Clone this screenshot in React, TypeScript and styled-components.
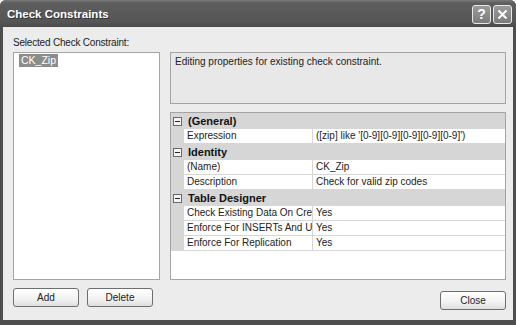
import styled, { createGlobalStyle } from "styled-components";

const GlobalStyle = createGlobalStyle`
  html, body {
    margin: 0;
    padding: 0;
    background: #ffffff;
  }
  * {
    box-sizing: border-box;
  }
`;

const Window = styled.div`
  width: 516px;
  height: 325px;
  display: flex;
  flex-direction: column;
  background: #4e4e4e;
  border-radius: 6px 6px 0 0;
  overflow: hidden;
  font-family: "Liberation Sans", Arial, sans-serif;
  font-size: 10px;
  color: #000;
`;

const TitleBar = styled.div`
  height: 27px;
  flex: none;
  display: flex;
  align-items: center;
  justify-content: space-between;
  padding: 0 4px 0 7px;
  background: linear-gradient(#7a7a7a 0px, #5e5e5e 3px, #555555 22px, #4a4a4a 27px);
`;

const Title = styled.div`
  color: #fff;
  font-weight: bold;
  font-size: 11.5px;
  text-shadow: 1px 1px 0 #333;
`;

const TitleButtons = styled.div`
  display: flex;
  gap: 2px;
  margin-top: 1px;
`;

const TitleButton = styled.div`
  width: 19px;
  height: 19px;
  border: 1px solid #e8e8e8;
  border-radius: 3px;
  background: linear-gradient(#9a9a9a, #7c7c7c);
  display: flex;
  align-items: center;
  justify-content: center;
  color: #fff;
  font-weight: bold;
  font-size: 14px;
`;

const Body = styled.div`
  flex: 1;
  margin: 0 3px 5px 3px;
  background: #ececec;
  display: flex;
  flex-direction: column;
  padding: 9px 7px 0 10px;
`;

const Label = styled.div`
  height: 16px;
  line-height: 14px;
  color: #222;
  letter-spacing: -0.2px;
`;

const Main = styled.div`
  display: flex;
  gap: 10px;
  height: 228px;
`;

const ListBox = styled.div`
  width: 147px;
  border: 1px solid #a4a4a4;
  background: #fff;
  padding: 1px 0 0 5px;
`;

const ListItem = styled.div<{ selected?: boolean }>`
  display: inline-block;
  padding: 0 2px;
  height: 13px;
  line-height: 13px;
  font-size: 10.5px;
  background: ${(p) => (p.selected ? "#8c8c8c" : "transparent")};
  color: ${(p) => (p.selected ? "#fff" : "#000")};
`;

const RightColumn = styled.div`
  flex: 1;
  display: flex;
  flex-direction: column;
  gap: 8px;
`;

const DescBox = styled.div`
  height: 52px;
  border: 1px solid #a4a4a4;
  background: #e8e8e8;
  padding: 3px 4px;
  color: #222;
`;

const Grid = styled.div`
  flex: 1;
  border: 1px solid #a4a4a4;
  background: #fff;
  display: flex;
  flex-direction: column;
`;

const CategoryRow = styled.div`
  height: 16px;
  display: flex;
  align-items: center;
  background: #d6d6d6;
  font-weight: bold;
  font-size: 11px;
  color: #111;
`;

const Gutter = styled.div`
  width: 13px;
  height: 100%;
  flex: none;
  display: flex;
  align-items: center;
  justify-content: center;
  background: #d6d6d6;
`;

const Expander = styled.div`
  width: 9px;
  height: 9px;
  border: 1px solid #6a6a6a;
  background: #f4f4f4;
  display: flex;
  align-items: center;
  justify-content: center;
  &::after {
    content: "";
    width: 5px;
    height: 1px;
    background: #222;
  }
`;

const CategoryLabel = styled.div`
  padding-left: 4px;
`;

const PropRow = styled.div`
  height: 15px;
  display: flex;
`;

const NameCell = styled.div`
  width: 129px;
  flex: none;
  padding-left: 3px;
  line-height: 14px;
  white-space: nowrap;
  overflow: hidden;
  border-bottom: 1px solid #d6d6d6;
  border-right: 1px solid #d6d6d6;
  color: #222;
`;

const ValueCell = styled.div`
  flex: 1;
  padding-left: 3px;
  line-height: 14px;
  white-space: nowrap;
  overflow: hidden;
  border-bottom: 1px solid #d6d6d6;
  color: #222;
`;

const ButtonRow = styled.div`
  display: flex;
  align-items: flex-start;
  padding-top: 8px;
  gap: 8px;
`;

const Button = styled.div<{ drop?: number }>`
  width: 66px;
  height: 19px;
  margin-top: ${(p) => p.drop ?? 0}px;
  border: 1px solid #6e6e6e;
  border-radius: 3px;
  background: linear-gradient(#ffffff, #f2f2f2 60%, #dedede);
  display: flex;
  align-items: center;
  justify-content: center;
  color: #222;
`;

const Spacer = styled.div`
  flex: 1;
`;

type Prop = { name: string; value: string };
type Category = { title: string; props: Prop[] };

const categories: Category[] = [
  {
    title: "(General)",
    props: [{ name: "Expression", value: "([zip] like '[0-9][0-9][0-9][0-9][0-9]')" }],
  },
  {
    title: "Identity",
    props: [
      { name: "(Name)", value: "CK_Zip" },
      { name: "Description", value: "Check for valid zip codes" },
    ],
  },
  {
    title: "Table Designer",
    props: [
      { name: "Check Existing Data On Creation Or Re-Enabling", value: "Yes" },
      { name: "Enforce For INSERTs And UPDATEs", value: "Yes" },
      { name: "Enforce For Replication", value: "Yes" },
    ],
  },
];

export default function App() {
  return (
    <>
      <GlobalStyle />
      <Window>
        <TitleBar>
          <Title>Check Constraints</Title>
          <TitleButtons>
            <TitleButton>?</TitleButton>
            <TitleButton>
              <svg width="11" height="11" viewBox="0 0 11 11">
                <path d="M1.5 1.5 L9.5 9.5 M9.5 1.5 L1.5 9.5" stroke="#fff" strokeWidth="2" />
              </svg>
            </TitleButton>
          </TitleButtons>
        </TitleBar>
        <Body>
          <Label>Selected Check Constraint:</Label>
          <Main>
            <ListBox>
              <ListItem selected>CK_Zip</ListItem>
            </ListBox>
            <RightColumn>
              <DescBox>Editing properties for existing check constraint.</DescBox>
              <Grid>
                {categories.map((c) => (
                  <div key={c.title}>
                    <CategoryRow>
                      <Gutter>
                        <Expander />
                      </Gutter>
                      <CategoryLabel>{c.title}</CategoryLabel>
                    </CategoryRow>
                    {c.props.map((p) => (
                      <PropRow key={p.name}>
                        <Gutter />
                        <NameCell>{p.name}</NameCell>
                        <ValueCell>{p.value}</ValueCell>
                      </PropRow>
                    ))}
                  </div>
                ))}
              </Grid>
            </RightColumn>
          </Main>
          <ButtonRow>
            <Button>Add</Button>
            <Button>Delete</Button>
            <Spacer />
            <Button drop={3}>Close</Button>
          </ButtonRow>
        </Body>
      </Window>
    </>
  );
}
